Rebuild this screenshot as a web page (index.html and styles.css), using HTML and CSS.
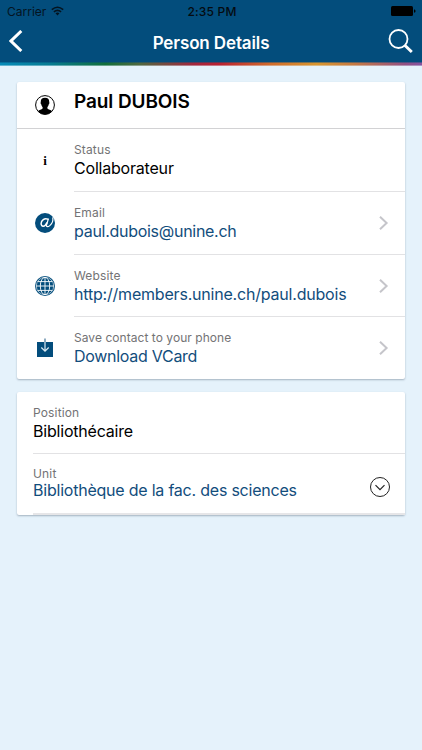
FILE: index.html
```
<!DOCTYPE html>
<html lang="en">
<head>
<meta charset="utf-8">
<title>Person Details</title>
<link rel="stylesheet" href="styles.css">
</head>
<body>
<header class="header">
  <div class="statusbar">
    <div class="carrier"><span>Carrier</span>
      <svg width="13" height="10" viewBox="0 0 13 10" fill="none" stroke="#050b10" stroke-width="1.6"><path d="M.8 3.7Q6.5-1.2 12.2 3.7M2.9 5.9Q6.5 2.9 10.1 5.9"/><path d="M4.5 7.2Q6.5 5.7 8.5 7.2L6.5 9.4Z" fill="#050b10" stroke="none"/></svg>
    </div>
    <span class="clock">2:35 PM</span>
    <svg class="battery" width="25" height="10" viewBox="0 0 25 10"><rect width="22" height="10" rx="1.5"/><path d="M23 3.2q1.6.4 1.6 1.8T23 6.8z"/></svg>
  </div>
  <div class="navbar">
    <svg width="14" height="22" viewBox="0 0 14 22" fill="none" stroke="#fff" stroke-width="3"><path d="M12.3 1L2 11l10.3 10"/></svg>
    <h1 class="title">Person Details</h1>
    <svg width="25" height="25" viewBox="0 0 25 25" fill="none" stroke="#fff"><circle cx="10.5" cy="10" r="9" stroke-width="1.8"/><path d="M16.5 16l7.3 7" stroke-width="3"/></svg>
  </div>
</header>
<main class="content">
  <section class="card">
    <div class="head">
      <svg class="icon" viewBox="0 0 20 20"><circle cx="10" cy="10" r="9.4" fill="#fff" stroke="#000"/><path d="M10 2.8C6.9 2.8 5.6 4.7 5.8 7.2c-.5.3-.1 1.9.5 2.2.3 1.4.8 2 1.3 2.6v1.6C6.7 14.7 4.1 14.7 3 16.3 6.7 20.6 13.3 20.6 17 16.3c-1.1-1.6-3.7-1.6-4.6-2.7V12c.5-.6 1-1.2 1.3-2.6.6-.3 1-1.9.5-2.2C14.4 4.7 13.1 2.8 10 2.8z"/></svg>
      <h2 class="name">Paul DUBOIS</h2>
    </div>
    <div class="row">
      <span class="icon info">i</span>
      <div class="body"><div class="label">Status</div><div class="value">Collaborateur</div></div>
    </div>
    <div class="row">
      <svg class="icon" viewBox="0 0 20 20"><circle cx="10" cy="10" r="10" fill="#034d7c"/><g fill="none" stroke="#fff" stroke-linecap="round"><path d="M12.8 6.2C9.5 4.6 6.2 7.4 6.1 10.6c0 3.4 3.6 3.7 5.8-.8" stroke-width="1.5"/><path d="M13.3 6l-1.7 5.9c-.6 2.5 1.5 2.1 3.2.7 2.3-1.9 3.5-4.6 3-7.7" stroke-width="1.2"/></g></svg>
      <div class="body"><div class="label">Email</div><div class="value link email">paul.dubois@unine.ch</div>
      <svg class="chevron" viewBox="0 0 10 14"><path d="M1 .8L7.6 7 1 13.2"/></svg></div>
    </div>
    <div class="row">
      <svg class="icon" viewBox="0 0 20 20"><circle cx="10" cy="10" r="10" fill="#034d7c"/><g fill="none" stroke="#fff" stroke-width=".9"><circle cx="10" cy="10" r="8.7" stroke-width=".6"/><ellipse cx="10" cy="10" rx="4.7" ry="8.7"/><path d="M10 1v18M1 10h18M2.7 5.6h14.6M2.7 14.4h14.6"/></g></svg>
      <div class="body"><div class="label">Website</div><div class="value link website">http://members.unine.ch/paul.dubois</div>
      <svg class="chevron" viewBox="0 0 10 14"><path d="M1 .8L7.6 7 1 13.2"/></svg></div>
    </div>
    <div class="row last">
      <svg class="icon" viewBox="0 0 20 20"><path d="M2 4h16v15H2z" fill="#034d7c"/><path d="M10 .5V4" stroke="#527f9f" stroke-width="1.3"/><path d="M10 4v9M6.3 9.5L10 13.2l3.7-3.7" fill="none" stroke="#dcecf4" stroke-width="1.2"/></svg>
      <div class="body"><div class="label save">Save contact to your phone</div><div class="value link download">Download VCard</div>
      <svg class="chevron" viewBox="0 0 10 14"><path d="M1 .8L7.6 7 1 13.2"/></svg></div>
    </div>
  </section>
  <section class="card details">
    <div class="body"><div class="label">Position</div><div class="value">Bibliothécaire</div></div>
    <div class="body unit">
      <div class="label">Unit</div><div class="value link">Bibliothèque de la fac. des sciences</div>
      <svg class="expand" viewBox="0 0 20 20" fill="none" stroke="#222"><circle cx="10" cy="10" r="9.5"/><path d="M5.5 8.1l4.5 4.6 4.5-4.6" stroke-width="1.2"/></svg>
    </div>
  </section>
</main>
</body>
</html>
```
FILE: styles.css
```
* { box-sizing: border-box; }
body {
  margin: 0;
  min-height: 750px;
  background: #e5f2fb;
  font-family: Inter, "Liberation Sans", sans-serif;
  color: #000;
}
svg { display: block; flex: none; }
.header {
  height: 66px;
  background: #034d7c;
  display: flex;
  flex-direction: column;
}
.header::after {
  content: "";
  height: 4px;
  margin-top: auto;
  background:
    linear-gradient(180deg, rgba(3, 77, 124, .45) 0 1px, transparent 1px 3px, rgba(229, 242, 251, .4) 3px),
    linear-gradient(90deg, #078bb8 0%, #087b91 12%, #126e3b 25%, #4f6840 33%, #a2263d 46%, #b92131 52%, #d06b2b 64%, #d8962f 75%, #c57942 84%, #925083 96%, #8354a0 100%);
}
.statusbar {
  height: 22px;
  padding: 0 6px 0 7px;
  display: grid;
  grid-template-columns: 1fr auto 1fr;
  align-items: center;
  font-size: 12px;
  color: #050b10;
}
.carrier { display: flex; align-items: center; gap: 5px; opacity: .85; }
.clock { font-weight: 500; letter-spacing: .2px; padding-left: 1px; }
.battery { justify-self: end; }
.navbar {
  height: 40px;
  padding: 0 9px;
  display: flex;
  align-items: center;
  justify-content: space-between;
}
.navbar > svg { margin-top: -2px; }
.title { margin: 2px 0 0 11px; color: #fff; font-size: 17px; line-height: 22px; font-weight: 600; letter-spacing: -.12px; }
.content { padding: 16px 17px 0; }
.card {
  background: #fff;
  border-radius: 2px;
  box-shadow: 0 1px 2px rgba(40, 60, 80, .35);
  margin-bottom: 13px;
}
.head {
  height: 47px;
  padding-left: 18px;
  display: flex;
  align-items: center;
  gap: 19px;
  border-bottom: 1px solid #d2d2d4;
}
.name { margin: 0 0 6px; font-size: 19px; line-height: 24px; font-weight: 600; letter-spacing: -.1px; }
.icon { width: 20px; height: 20px; flex: none; }
.row { display: flex; gap: 19px; padding-left: 18px; height: 62.75px; align-items: center; }
.row.last { height: 62px; }
.info { font: bold 13px/20px "Liberation Serif", serif; text-align: center; position: relative; top: 1px; }
.body {
  position: relative;
  flex: 1;
  align-self: stretch;
  padding-top: 12px;
  border-bottom: 1px solid #e2e2e4;
}
.last .body { border-bottom: 0; }
.label { font-size: 12px; line-height: 17px; color: #737375; letter-spacing: .15px; }
.value { font-size: 16px; line-height: 20px; letter-spacing: -.2px; white-space: nowrap; }
.link { color: #124d7c; }
.email { letter-spacing: -.28px; }
.save { letter-spacing: .05px; }
.download { letter-spacing: -.28px; }
.chevron { position: absolute; right: 16px; top: 24px; width: 10px; height: 14px; fill: none; stroke: #c5c5ca; stroke-width: 2; }
.details { padding-left: 16px; }
.details .body { height: 62px; }
.details .unit { height: 61px; border-bottom: 2px solid #e6e6e8; }
.unit .label { line-height: 16px; }
.unit .value { line-height: 16px; }
.unit .link { letter-spacing: -.22px; }
.expand { position: absolute; right: 15px; top: 22.5px; width: 20px; height: 20px; }
```
